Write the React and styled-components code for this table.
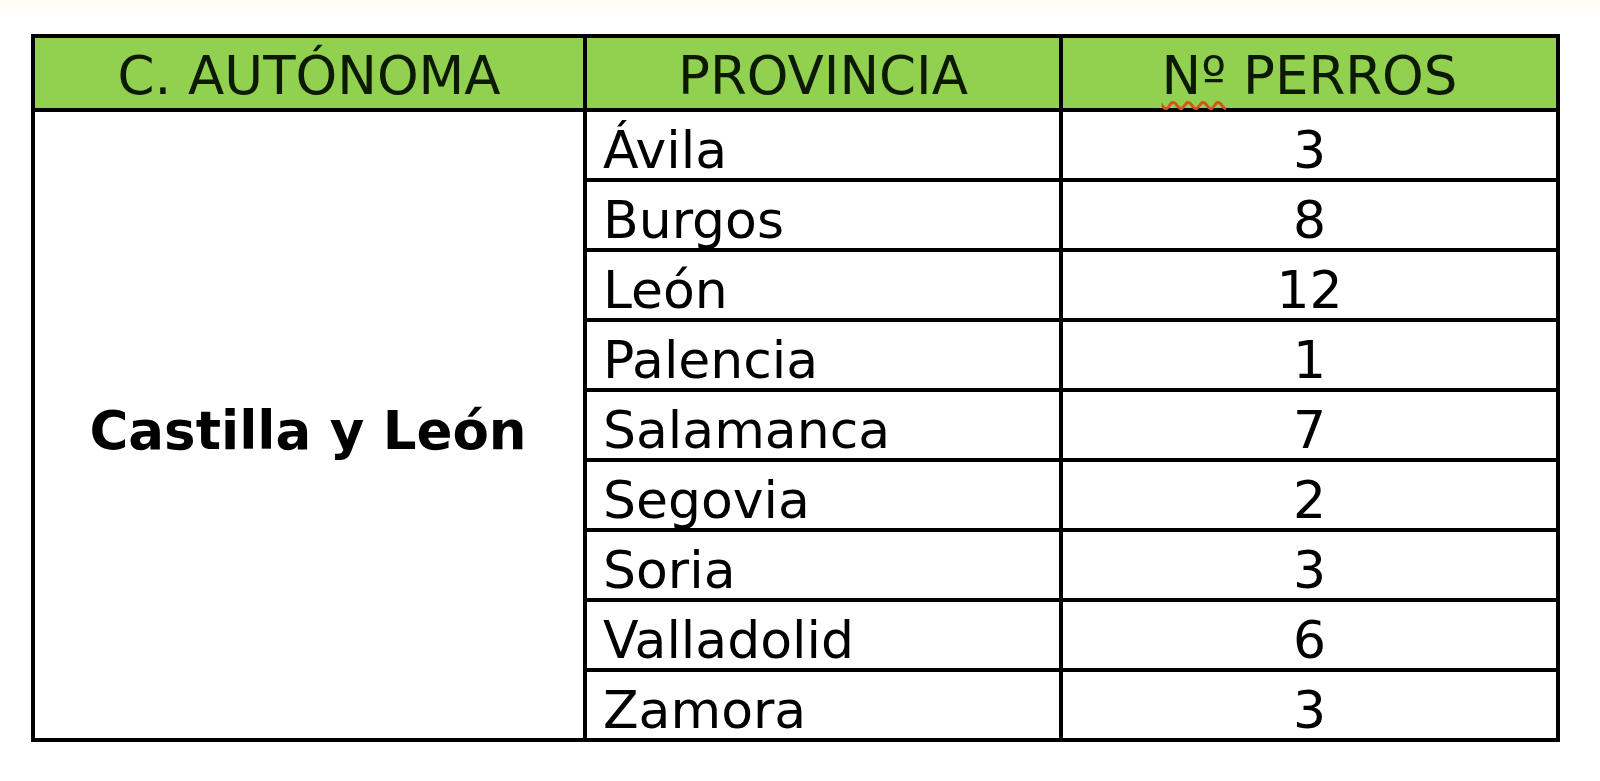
import React from 'react';
import styled, { createGlobalStyle } from 'styled-components';

const GlobalStyle = createGlobalStyle`
  html, body {
    margin: 0;
    padding: 0;
    background: #ffffff;
  }
  body {
    font-family: "DejaVu Sans", Verdana, sans-serif;
    color: #000;
  }
`;

const Page = styled.div`
  width: 1600px;
  height: 781px;
  padding: 34px 0 0 31px;
  box-sizing: border-box;
  background: linear-gradient(#fffdf4 0, #ffffff 26px);
`;

const Table = styled.table`
  border-collapse: collapse;
  table-layout: fixed;
  width: 1525px;
  border: 4px solid #000;
  font-family: "DejaVu Sans", Verdana, sans-serif;
`;

const HeadRow = styled.tr`
  height: 74px;
  background: #92d050;
`;

const Row = styled.tr`
  height: 70px;
`;

const HeadCell = styled.th`
  border: 4px solid #000;
  padding: 11px 0 0;
  vertical-align: top;
  text-align: center;
  font-size: 53px;
  font-weight: normal;
  line-height: 1;
  color: #0c1a04;
  white-space: nowrap;
`;

// subrayado ondulado del corrector ortográfico
const Spell = styled.span`
  text-decoration: underline wavy #d2561c;
  text-decoration-thickness: 3px;
  text-underline-offset: 7px;
`;

const Cell = styled.td`
  border: 4px solid #000;
  padding: 12px 16px 0;
  vertical-align: top;
  text-align: ${p => (p.$center ? 'center' : 'left')};
  font-size: 52px;
  line-height: 1;
  white-space: nowrap;
`;

const RegionCell = styled.td`
  border: 4px solid #000;
  padding: 10px 2px 0 0;
  vertical-align: middle;
  text-align: center;
  font-size: 53px;
  font-weight: bold;
  line-height: 1;
  white-space: nowrap;
`;

const rows = [
  { prov: 'Ávila', perros: 3 },
  { prov: 'Burgos', perros: 8 },
  { prov: 'León', perros: 12 },
  { prov: 'Palencia', perros: 1 },
  { prov: 'Salamanca', perros: 7 },
  { prov: 'Segovia', perros: 2 },
  { prov: 'Soria', perros: 3 },
  { prov: 'Valladolid', perros: 6 },
  { prov: 'Zamora', perros: 3 }
];

const App = () => {
  return (
    <Page>
      <GlobalStyle />
      <Table>
        <colgroup>
          <col style={{ width: 552 }} />
          <col style={{ width: 476 }} />
          <col style={{ width: 497 }} />
        </colgroup>
        <thead>
          <HeadRow>
            <HeadCell>C. AUTÓNOMA</HeadCell>
            <HeadCell>PROVINCIA</HeadCell>
            <HeadCell><Spell>Nº</Spell> PERROS</HeadCell>
          </HeadRow>
        </thead>
        <tbody>
          {rows.map((r, i) => (
            <Row key={r.prov}>
              {i === 0 && (
                <RegionCell rowSpan={rows.length}>Castilla y León</RegionCell>
              )}
              <Cell>{r.prov}</Cell>
              <Cell $center>{r.perros}</Cell>
            </Row>
          ))}
        </tbody>
      </Table>
    </Page>
  );
};

export default App;
